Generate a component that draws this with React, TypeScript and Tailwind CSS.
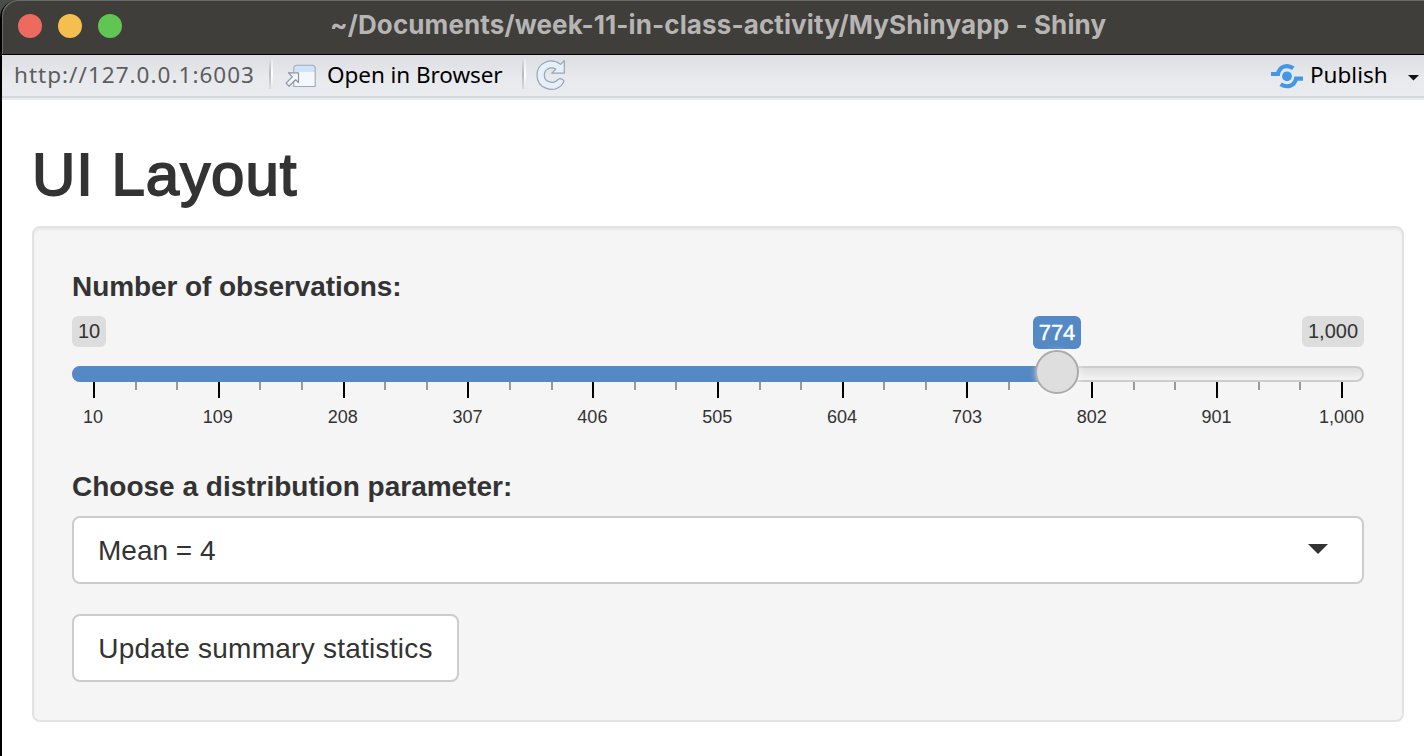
import React from "react";

const MAJOR = ["10", "109", "208", "307", "406", "505", "604", "703", "802", "901", "1,000"];
const TICKS = Array.from({ length: 31 }, (_, i) => i);

function TitleBar() {
  return (
    <header className="flex h-[55px] items-start rounded-tl-[16px] border-b border-black bg-[#3f3e3b] pl-4 shadow-[inset_1px_1px_0_#6a6a68]">
      <div className="flex gap-4 pt-[14px]">
        <span className="size-6 rounded-full bg-[#ed6a5e]" />
        <span className="size-6 rounded-full bg-[#f5bf4f]" />
        <span className="size-6 rounded-full bg-[#61c554]" />
      </div>
      <h1 className="ml-[208px] whitespace-nowrap pt-[9px] font-['Inter',sans-serif] text-[26px] font-bold leading-[32px] tracking-[0.11px] text-[#b6b5b3]">
        ~/Documents/week-11-in-class-activity/MyShinyapp - Shiny
      </h1>
    </header>
  );
}

function Divider() {
  return (
    <span className="flex h-[30px] w-[4px]">
      <span className="w-[2px] bg-linear-to-b from-[#dcdde1] via-[#b9babf] to-[#dcdde1]" />
      <span className="w-[2px] bg-linear-to-b from-[#e6e6ea] via-white to-[#e6e6ea]" />
    </span>
  );
}

function OpenIcon() {
  return (
    <svg className="block" width="32" height="24" viewBox="0 0 32 24">
      <path d="M9 21.5V4.5Q9 1.5 12 1.5H27Q30 1.5 30 4.5V22.5H9Z" fill="#f4f7fb" />
      <path d="M9 8V4.5Q9 1.5 12 1.5H27Q30 1.5 30 4.5V8Z" fill="#cfe4fa" />
      <path d="M8.8 8V4.5Q8.8 1.3 12 1.3H27Q30.2 1.3 30.2 4.5V22.5H8.8V18" fill="none" stroke="#9aaaba" strokeWidth="1.1" />
      <path d="M3.5 8.8H13.5V18.6L10.6 15.8L4 22.2L1 19.2L7.3 12.8Z" fill="#f3f5f8" stroke="#8395a7" strokeWidth="1.2" strokeLinejoin="round" />
    </svg>
  );
}

function ReloadIcon() {
  return (
    <svg className="block" width="30" height="32" viewBox="0 0 30 32">
      <path
        d="M28.3 1.6V14.2H15.8L19.8 10.1C13.5 7 8.3 11 8.3 16.2C8.3 23 17.7 26 22.4 20.2Q25 18.6 27.6 21.4C28.8 23 26.4 25 25 26.6C16.6 34.4 1 29 1 16.2C1 3.6 15.2-2.2 24.6 5.4Z"
        fill="#e6effb"
        stroke="#98a5b3"
        strokeWidth="1.2"
        strokeLinejoin="round"
      />
    </svg>
  );
}

function PublishIcon() {
  return (
    <svg className="block" width="32" height="26" viewBox="0 0 32 26">
      <g fill="none" stroke="#4398e5" strokeWidth="4.2">
        <path d="M0 11H7C8.5 3.5 16 .8 22.3 5.2" />
        <path d="M32 15.6H25C23.5 23.1 16 25.2 9.6 21.2" />
      </g>
      <circle cx="16" cy="13.3" r="4.9" fill="#4398e5" />
    </svg>
  );
}

function Toolbar() {
  return (
    <nav className="flex h-[45px] items-start border-b-2 border-[#e9eaee] bg-linear-to-b from-[#dddee2] via-[#e8e9ed] to-[#ebecf0] font-['Noto_Sans',sans-serif] text-[22.5px] leading-[32px] shadow-[inset_0_-2px_0_#d4d8dd]">
      <div className="w-[267px] whitespace-nowrap pl-[12px] pt-[4px] tracking-[1.02px] text-[#5c5d5f]">http://127.0.0.1:6003</div>
      <div className="pt-[4px]"><Divider /></div>
      <button className="ml-[12px] flex items-start text-black">
        <span className="pt-[9px]"><OpenIcon /></span>
        <span className="ml-[10px] w-[195px] whitespace-nowrap pt-[4px] text-left tracking-[-0.06px]">Open in Browser</span>
      </button>
      <div className="pt-[4px]"><Divider /></div>
      <button className="ml-[10px] pt-[4px]" aria-label="Reload"><ReloadIcon /></button>
      <button className="ml-auto flex items-start text-black">
        <span className="pt-[8px]"><PublishIcon /></span>
        <span className="ml-[7px] w-[98px] pt-[4px] text-left">Publish</span>
        <svg className="mr-[5px] mt-[20px] block" width="11" height="6" viewBox="0 0 11 6">
          <path d="M0 0H11L5.5 5.6Z" fill="#111" />
        </svg>
      </button>
    </nav>
  );
}

function Slider() {
  return (
    <div className="relative mt-[11px] h-[120px]">
      <div className="flex justify-between text-[20px] leading-[30px] text-[#333]">
        <span className="h-[31px] w-[34px] rounded-[6px] bg-[#dddddd] text-center">10</span>
        <span className="h-[31px] w-[62px] rounded-[6px] bg-[#dddddd] text-center">1,000</span>
      </div>
      <div className="mt-[19px] h-[16px] rounded-full border-2 border-[#cccccc] bg-linear-to-b from-[#dedede] to-white to-[150%]">
        <div className="-ml-[2px] -mt-[2px] h-[16px] w-[985px] rounded-l-full bg-[#5489c6]" />
      </div>
      <div className="ml-[21px] flex w-[1250px] items-start justify-between">
        {TICKS.map((i) => (
          <span key={i} className={i % 3 === 0 ? "h-[16px] w-[2px] bg-black" : "h-[8px] w-[2px] bg-[#999999]"} />
        ))}
      </div>
      <div className="ml-[21px] mt-[8px] flex w-[1248.5px] justify-between text-[18px] leading-[22px] text-[#333]">
        {MAJOR.map((label) => (
          <span key={label} className="flex w-0 justify-center whitespace-nowrap">{label}</span>
        ))}
      </div>
      <span className="absolute left-[961px] top-0 h-[33px] w-[48px] rounded-[6px] bg-[#5489c6] text-center text-[22px] leading-[33px] text-white [-webkit-text-stroke:0.4px_white]">774</span>
      <span className="absolute left-[963px] top-[34px] size-[44px] rounded-full border-2 border-[#ababab] bg-[#dedede] shadow-[1px_1px_6px_rgba(255,255,255,0.6)]" />
    </div>
  );
}

export default function App() {
  return (
    <div className="h-[756px] w-[1424px] overflow-hidden bg-[#4a4c4b] font-['Liberation_Sans',sans-serif] text-[#333]">
      <div className="flex h-full flex-col rounded-tl-[18px] border-l-2 border-black">
        <TitleBar />
        <Toolbar />
        <main className="flex-1 bg-white pl-[30px] pr-[20px] pt-[42px]">
          <h2 className="h-[84px] text-[60px] leading-[66px] tracking-[0.95px] [-webkit-text-stroke:1.8px_#333]">UI Layout</h2>
          <section className="flex h-[496px] flex-col items-stretch rounded-[8px] border-2 border-[#e3e3e3] bg-[#f5f5f5] px-[38px] pt-[39px] shadow-[inset_0_2px_2px_rgba(0,0,0,0.05)]">
            <label className="block h-[38px] text-[28px] font-bold leading-[40px] tracking-[-0.08px]">Number of observations:</label>
            <Slider />
            <label className="mt-[31px] block h-[40px] text-[28px] font-bold leading-[40px]">Choose a distribution parameter:</label>
            <div className="mt-[9px] flex h-[68px] items-center justify-between rounded-[8px] border-2 border-[#cccccc] bg-white pl-[24px] pr-[34px] text-[28px]">
              <span className="pt-[2px]">Mean = 4</span>
              <svg className="-mt-[2px]" width="20" height="10" viewBox="0 0 20 10">
                <path d="M0 0H20L10 10Z" fill="#333" />
              </svg>
            </div>
            <button className="mt-[30px] h-[68px] w-[387px] whitespace-nowrap rounded-[8px] border-2 border-[#cccccc] bg-white pt-[2px] text-[28px] tracking-[0.25px]">Update summary statistics</button>
          </section>
        </main>
      </div>
    </div>
  );
}
